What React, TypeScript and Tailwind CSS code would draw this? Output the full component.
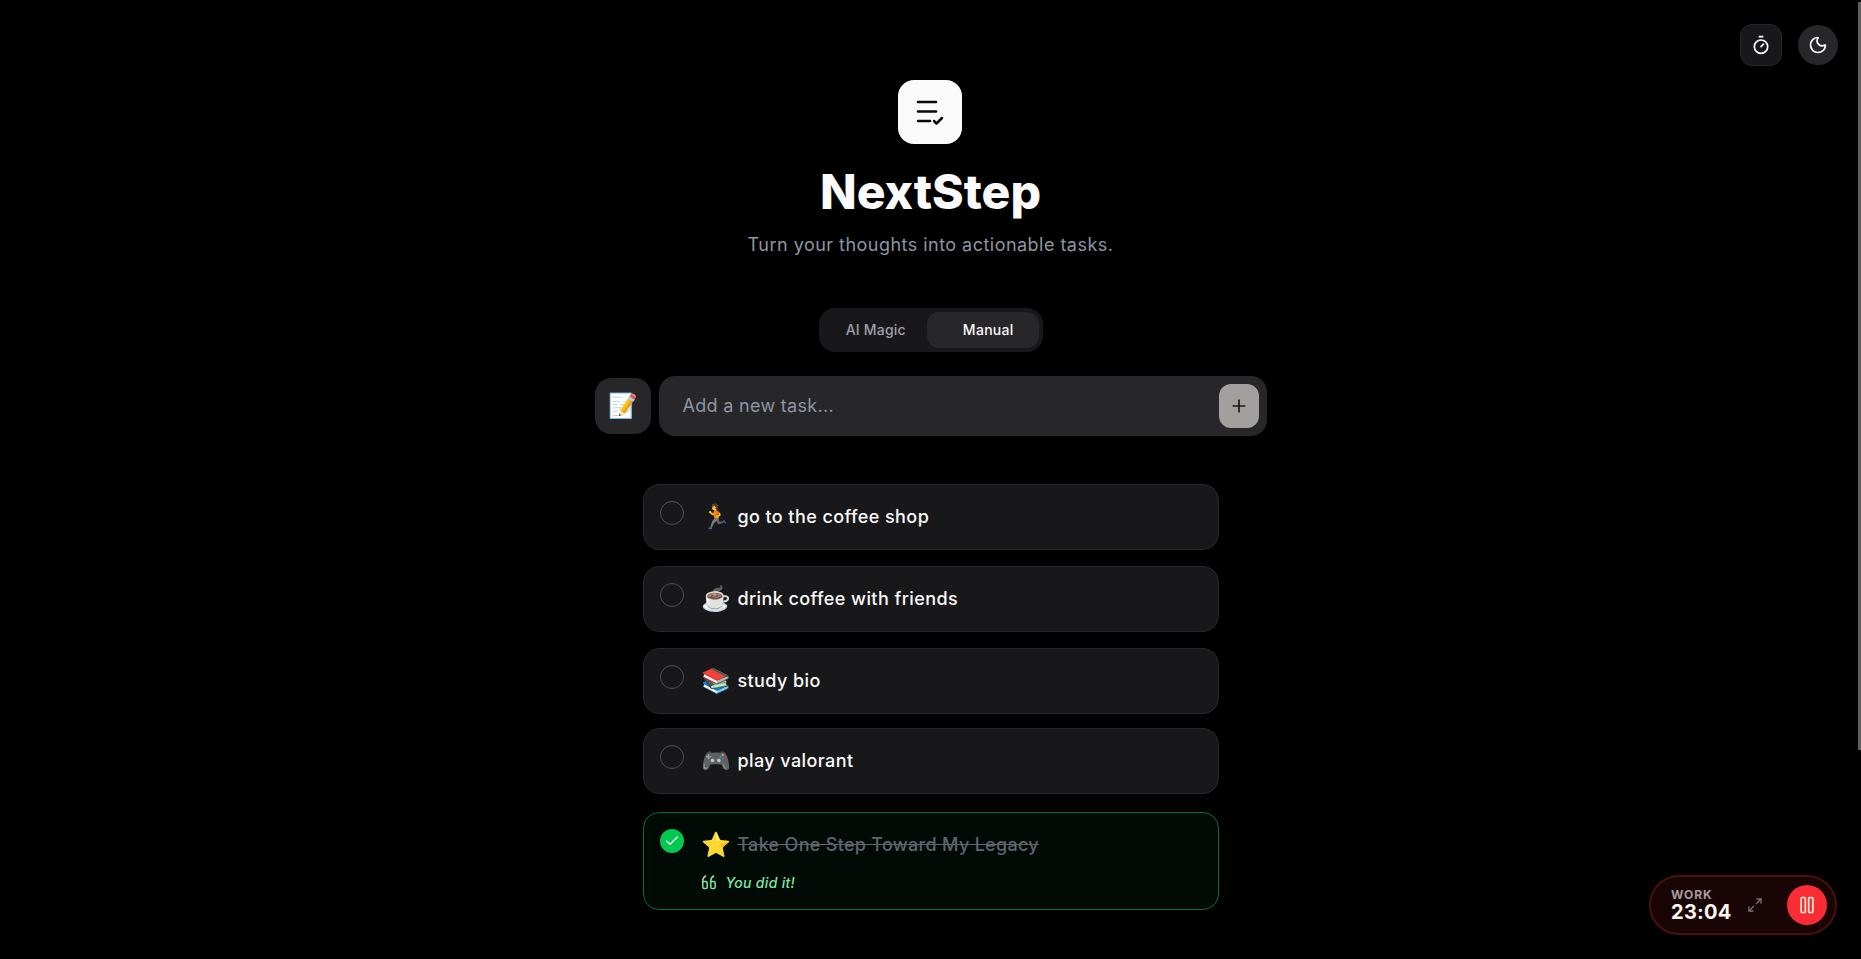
import { Check, Maximize2, Moon, Pause, Plus, Timer } from "lucide-react"

const font = { fontFamily: "Inter, 'Noto Color Emoji', sans-serif" }

const tasks = [
  { id: 1, emoji: "🏃", title: "go to the coffee shop", gap: "mb-4" },
  { id: 2, emoji: "☕", title: "drink coffee with friends", gap: "mb-4" },
  { id: 3, emoji: "📚", title: "study bio", gap: "mb-[14px]" },
  { id: 4, emoji: "🎮", title: "play valorant", gap: "mb-[18px]" },
]

function LogoIcon() {
  return (
    <svg width="28" height="28" viewBox="0 0 28 28" fill="none" stroke="#09090b" strokeWidth="2.5" strokeLinecap="round" strokeLinejoin="round">
      <path d="M2 4h18" />
      <path d="M2 13.5h18" />
      <path d="M2 23h12" />
      <path d="M18 23l2.5 2.5L26 20" />
    </svg>
  )
}

function QuoteIcon() {
  return (
    <svg width="15" height="15" viewBox="0 0 15 15" fill="none" stroke="currentColor" strokeWidth="1.5" strokeLinecap="round" strokeLinejoin="round">
      <path d="M3.6 1C1.8 2 .8 3.6.8 5.5v6.4c0 1 .6 1.6 1.6 1.6h1.2c1 0 1.6-.6 1.6-1.6V8.1c0-1-.6-1.6-1.6-1.6H.8" />
      <path d="M11.6 1C9.8 2 8.8 3.6 8.8 5.5v6.4c0 1 .6 1.6 1.6 1.6h1.2c1 0 1.6-.6 1.6-1.6V8.1c0-1-.6-1.6-1.6-1.6H8.8" />
    </svg>
  )
}

function TaskCard({ emoji, title, gap }: { emoji: string; title: string; gap: string }) {
  return (
    <div className={`flex h-[66px] items-start gap-[18px] rounded-2xl border border-[#27272a] bg-[#18181b] px-4 pt-4 ${gap}`}>
      <div className="h-6 w-6 shrink-0 rounded-full border border-[#52525b]" />
      <div className="flex items-center gap-[6px]">
        <span className="text-2xl leading-8">{emoji}</span>
        <span className="text-[18px] font-medium leading-8 tracking-[0.42px] text-[#fafafa]">{title}</span>
      </div>
    </div>
  )
}

export default function App() {
  return (
    <div className="relative h-[959px] overflow-hidden bg-black pt-20" style={font}>
      <div className="absolute right-[23px] top-6 flex items-center gap-4">
        <button className="flex h-[42px] w-[42px] items-center justify-center rounded-xl border border-[#27272a] bg-[#18181b] text-white">
          <Timer size={20} />
        </button>
        <button className="flex h-10 w-10 items-center justify-center rounded-full bg-[#27272a] text-white">
          <Moon size={20} />
        </button>
      </div>

      <div className="absolute right-0 top-[2px] h-[748px] w-[3px] bg-[#5f5f5f]" />

      <div className="flex flex-col items-center">
        <div className="mr-[1px] flex h-16 w-16 items-center justify-center rounded-2xl bg-[#fafafa]">
          <LogoIcon />
        </div>
        <h1 className="mt-[18px] text-[48px] font-extrabold leading-[60px] text-[#fafafa]">NextStep</h1>
        <p className="mt-[9px] text-[18px] leading-7 tracking-[0.47px] text-[#8e95a3]">Turn your thoughts into actionable tasks.</p>

        <div className="mt-[49px] flex h-11 w-[224px] items-center rounded-2xl bg-[#18181b] p-1">
          <button className="flex h-9 w-[105px] items-center justify-center pl-[2px] text-sm font-medium tracking-[0.2px] text-[#9f9fa9]">AI Magic</button>
          <button className="flex h-9 w-[112px] items-center justify-center rounded-xl bg-[#27272a] pl-[11px] text-sm font-medium tracking-[0.3px] text-[#fafafa]">Manual</button>
        </div>

        <div className="mt-6 flex items-center gap-2">
          <button className="flex h-14 w-14 items-center justify-center rounded-2xl bg-[#27272a] pl-[2px] text-2xl">📝</button>
          <div className="flex h-[60px] w-[608px] items-center justify-between rounded-2xl bg-[#27272a] pl-6 pr-2">
            <span className="pb-[2px] text-[18px] tracking-[0.3px] text-[#8e95a3]">Add a new task...</span>
            <button className="flex h-11 w-10 items-center justify-center rounded-xl bg-[#a1a09e] text-[#18181b]">
              <Plus size={20} />
            </button>
          </div>
        </div>

        <div className="mt-12 w-[576px]">
          {tasks.map((task) => (
            <TaskCard key={task.id} emoji={task.emoji} title={task.title} gap={task.gap} />
          ))}

          <div className="flex h-[98px] flex-col rounded-2xl border border-[#0f6b33] bg-[#010a05] px-4 pt-4">
            <div className="flex items-start gap-[18px]">
              <div className="flex h-6 w-6 shrink-0 items-center justify-center rounded-full bg-[#00c951] text-white">
                <Check size={16} />
              </div>
              <div className="flex items-center gap-[6px]">
                <span className="text-2xl leading-8">⭐</span>
                <span className="text-[18px] font-medium leading-8 tracking-[0.3px] text-[#5f6470] line-through">Take One Step Toward My Legacy</span>
              </div>
            </div>
            <div className="ml-[42px] mt-[11px] flex items-center gap-[9px] text-[#7be8a5]">
              <QuoteIcon />
              <span className="text-[14px] font-medium italic tracking-[0.3px]">You did it!</span>
            </div>
          </div>
        </div>
      </div>

      <div className="absolute bottom-6 right-6 flex h-[60px] w-[188px] items-center rounded-full border-2 border-[#4a1010] bg-[#1a0505] pl-[20px] pr-2">
        <div className="flex flex-col">
          <span className="text-[12px] font-bold leading-[14px] tracking-[0.9px] text-[#a89c9c]">WORK</span>
          <span className="text-[20px] font-bold leading-[20px] tracking-[0.3px] text-[#fafaf0]">23:04</span>
        </div>
        <Maximize2 size={16} className="ml-auto mr-6 text-[#71717a]" />
        <button className="flex h-10 w-10 items-center justify-center rounded-full bg-[#fb2c36] text-[#fdf0d5]">
          <Pause size={20} />
        </button>
      </div>
    </div>
  )
}
